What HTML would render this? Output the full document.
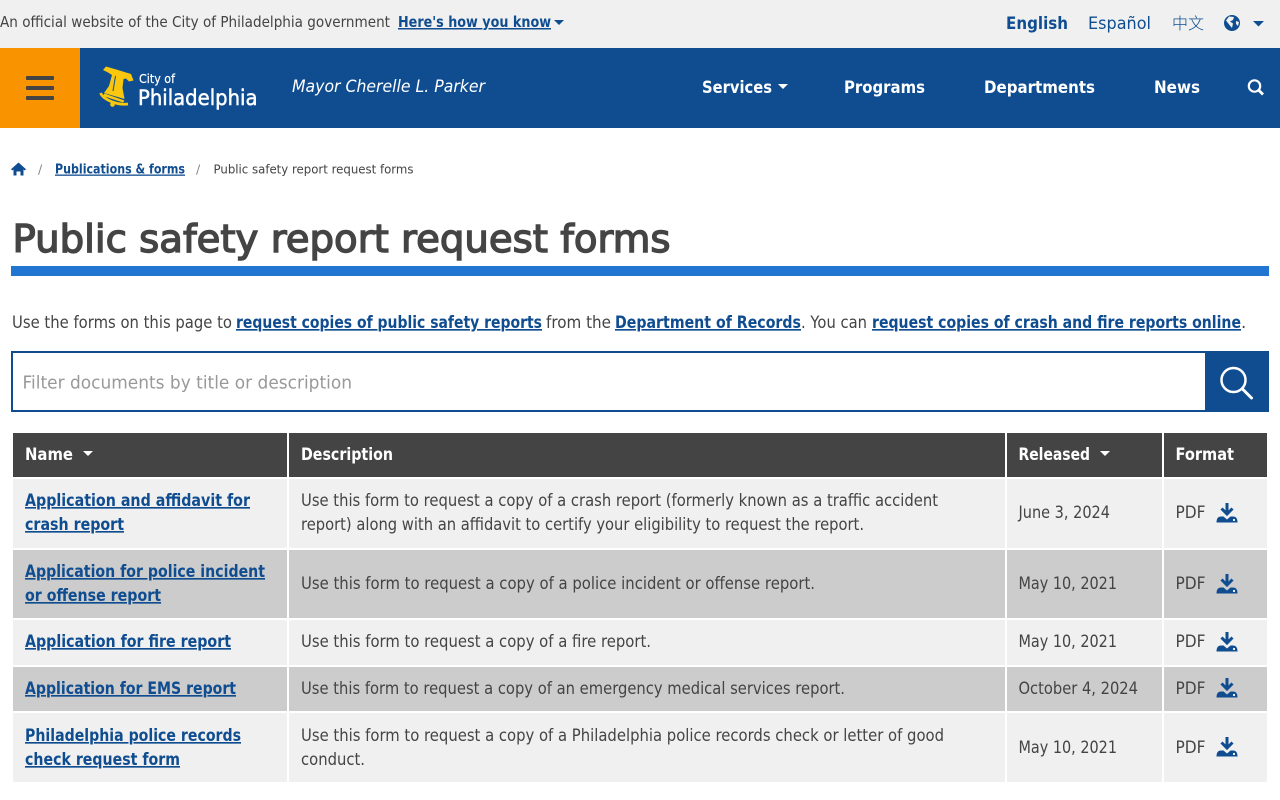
<!DOCTYPE html>
<html lang="en">
<head>
<meta charset="utf-8">
<title>Public safety report request forms</title>
<style>
html,body{margin:0;padding:0;width:1280px;height:800px;overflow:hidden;background:#fff}
svg{display:block;position:absolute;left:0;top:0}
text{font-family:"DejaVu Sans","Liberation Sans",sans-serif;white-space:pre}
.b{font-weight:700}
.t{font-size:16.5px;fill:#444}
.l{font-size:16.5px;font-weight:700;fill:#0f4d90;text-decoration:underline}
.h{font-size:16.5px;font-weight:700;fill:#fff}
.n{font-size:17px;font-weight:700;fill:#fff}
.m{font-size:15px;fill:#444}
.bc{font-size:12.5px;fill:#444}
</style>
</head>
<body>
<svg width="1280" height="800" viewBox="0 0 1280 800" xmlns="http://www.w3.org/2000/svg">
<defs>
<g id="dl">
<path d="M0-10V0M-5.500-4.500L0 1L5.500-4.500" fill="none" stroke="#0f4d90" stroke-width="3"/>
<path d="M-10.500 9.500C-10.500 5.500-9 3.500-6 3.500L-3.500 3.500L0 6.500L3.500 3.500L6 3.500C9 3.500 10.500 5.500 10.500 9.500Z" fill="#0f4d90"/>
<circle cx="7" cy="7" r="1.100" fill="#fff"/>
</g>
</defs>

<!-- Official banner -->
<rect width="1280" height="48" fill="#f0f0f0"/>
<text x="0" y="27" class="m" textLength="390" lengthAdjust="spacingAndGlyphs">An official website of the City of Philadelphia government</text>
<text x="398" y="27" font-size="15" class="b" fill="#0f4d90" text-decoration="underline" textLength="153" lengthAdjust="spacingAndGlyphs">Here's how you know</text>
<path d="M554 20H564L559 25Z" fill="#0f4d90"/>
<text x="1006" y="29" font-size="17" class="b" fill="#0f4d90" textLength="62" lengthAdjust="spacingAndGlyphs">English</text>
<text x="1088" y="29" font-size="17" fill="#0f4d90" textLength="63" lengthAdjust="spacingAndGlyphs">Español</text>
<text x="1172" y="29" font-size="16" fill="#0f4d90" style="font-family:'Noto Sans CJK SC',sans-serif;font-weight:300" textLength="32">中文</text>
<circle cx="1232" cy="23" r="8" fill="#0f4d90"/>
<path d="M1229 16.500L1234 17L1233 20L1230 21.500L1233 23.500L1232 28L1229.500 25L1226 20.500Z M1236 21L1239 22L1238 26L1236 24Z" fill="#f0f0f0"/>
<path d="M1253 21H1264L1258.500 26.500Z" fill="#0f4d90"/>

<!-- Nav -->
<rect y="48" width="1280" height="80" fill="#0f4d90"/>
<rect y="48" width="80" height="80" fill="#f99300"/>
<rect x="26" y="76" width="28" height="4" rx="1" fill="#444"/>
<rect x="26" y="86" width="28" height="4" rx="1" fill="#444"/>
<rect x="26" y="96" width="28" height="4" rx="1" fill="#444"/>

<!-- Liberty bell -->
<path d="M103 70L106 66.500L118 70L131 74L133.500 80.500L129 81.500L126 78.500L123.500 79L122.500 88L124.500 99L104 93L109 86L112 75L108 72.500Z" fill="#f9c80e"/>
<path d="M115.500 76L113 91" stroke="#0f4d90" stroke-width="1" fill="none"/>
<path d="M100.500 93C103 99 116 105.500 128 104" stroke="#f9c80e" stroke-width="2.800" fill="none"/>
<path d="M104.500 93.500L124.500 100.500L123 102.500L103 96Z" fill="#f9c80e"/>
<circle cx="112.500" cy="104.500" r="2.300" fill="#f9c80e"/>

<text x="139" y="83" font-size="12" fill="#fff" stroke="#fff" stroke-width=".2" textLength="36" lengthAdjust="spacingAndGlyphs">City of</text>
<text x="138" y="105" font-size="21.500" fill="#fff" stroke="#fff" stroke-width=".5" textLength="119.500" lengthAdjust="spacingAndGlyphs">Philadelphia</text>
<text x="292" y="92" font-size="16.500" font-style="italic" fill="#fff" textLength="193" lengthAdjust="spacingAndGlyphs">Mayor Cherelle L. Parker</text>

<text x="702" y="93" class="n" textLength="70" lengthAdjust="spacingAndGlyphs">Services</text>
<path d="M778 84H788L783 89Z" fill="#fff"/>
<text x="844" y="93" class="n" textLength="81" lengthAdjust="spacingAndGlyphs">Programs</text>
<text x="984" y="93" class="n" textLength="111" lengthAdjust="spacingAndGlyphs">Departments</text>
<text x="1154" y="93" class="n" textLength="46" lengthAdjust="spacingAndGlyphs">News</text>
<circle cx="1254.500" cy="86" r="5.700" fill="none" stroke="#fff" stroke-width="2.200"/>
<path d="M1258.500 90L1263 94.500" stroke="#fff" stroke-width="2.800"/>

<!-- Breadcrumb -->
<path d="M18.500 162.500L26 169.300L24.800 170.500L23.500 169.500V175.500H20.500V171.500H16.500V175.500H13.500V169.500L12.200 170.500L11 169.300Z" fill="#0f4d90"/>
<text x="38" y="173.500" class="bc" style="fill:#888">/</text>
<text x="55" y="173.500" font-size="13" class="b" fill="#0f4d90" text-decoration="underline" textLength="130" lengthAdjust="spacingAndGlyphs">Publications &amp; forms</text>
<text x="196" y="173.500" class="bc" style="fill:#888">/</text>
<text x="213.500" y="173.500" class="bc" font-size="13" textLength="200" lengthAdjust="spacingAndGlyphs">Public safety report request forms</text>

<!-- Title -->
<text x="12.500" y="252" font-size="38" fill="#444" stroke="#444" stroke-width="1.400" textLength="658" lengthAdjust="spacingAndGlyphs">Public safety report request forms</text>
<rect x="11" y="266" width="1258" height="10" fill="#2176d2"/>

<!-- Intro -->
<text x="12" y="328" class="t" textLength="220" lengthAdjust="spacingAndGlyphs">Use the forms on this page to</text>
<text x="236" y="328" class="l" textLength="306" lengthAdjust="spacingAndGlyphs">request copies of public safety reports</text>
<text x="546" y="328" class="t" textLength="65" lengthAdjust="spacingAndGlyphs">from the</text>
<text x="615" y="328" class="l" textLength="186" lengthAdjust="spacingAndGlyphs">Department of Records</text>
<text x="801" y="328" class="t" textLength="66" lengthAdjust="spacingAndGlyphs">. You can</text>
<text x="872" y="328" class="l" textLength="369" lengthAdjust="spacingAndGlyphs">request copies of crash and fire reports online</text>
<text x="1241" y="328" class="t">.</text>

<!-- Search -->
<rect x="12" y="352" width="1256" height="59" fill="#fff" stroke="#0f4d90" stroke-width="2"/>
<rect x="1205" y="351" width="64" height="61" fill="#0f4d90"/>
<text x="22.500" y="388.500" font-size="18" fill="#999" textLength="329.500" lengthAdjust="spacingAndGlyphs">Filter documents by title or description</text>
<circle cx="1233.500" cy="380" r="12" fill="none" stroke="#fff" stroke-width="2.500"/>
<path d="M1242.500 389L1251.500 398" stroke="#fff" stroke-width="3" stroke-linecap="round"/>

<!-- Table header -->
<rect x="13" y="433" width="274" height="44" fill="#444"/>
<rect x="289" y="433" width="716" height="44" fill="#444"/>
<rect x="1007" y="433" width="155" height="44" fill="#444"/>
<rect x="1164" y="433" width="103" height="44" fill="#444"/>
<text x="25" y="460" class="h" textLength="48" lengthAdjust="spacingAndGlyphs">Name</text>
<path d="M83 451H93L88 456Z" fill="#fff"/>
<text x="301" y="460" class="h" textLength="92" lengthAdjust="spacingAndGlyphs">Description</text>
<text x="1018.500" y="460" class="h" textLength="71.500" lengthAdjust="spacingAndGlyphs">Released</text>
<path d="M1100 451H1110L1105 456Z" fill="#fff"/>
<text x="1175.500" y="460" class="h" textLength="58.500" lengthAdjust="spacingAndGlyphs">Format</text>

<!-- Row 1 -->
<g fill="#f0f0f0">
<rect x="13" y="479" width="274" height="69"/><rect x="289" y="479" width="716" height="69"/><rect x="1007" y="479" width="155" height="69"/><rect x="1164" y="479" width="103" height="69"/>
</g>
<text x="25" y="506" class="l" textLength="225" lengthAdjust="spacingAndGlyphs">Application and affidavit for</text>
<text x="25" y="530" class="l" textLength="99" lengthAdjust="spacingAndGlyphs">crash report</text>
<text x="301" y="506" class="t" textLength="637" lengthAdjust="spacingAndGlyphs">Use this form to request a copy of a crash report (formerly known as a traffic accident</text>
<text x="301" y="530" class="t" textLength="563" lengthAdjust="spacingAndGlyphs">report) along with an affidavit to certify your eligibility to request the report.</text>
<text x="1018.500" y="518" class="t" textLength="91.500" lengthAdjust="spacingAndGlyphs">June 3, 2024</text>
<text x="1175.500" y="518" class="t" textLength="30" lengthAdjust="spacingAndGlyphs">PDF</text>
<use href="#dl" x="1227" y="513"/>

<!-- Row 2 -->
<g fill="#ccc">
<rect x="13" y="550" width="274" height="68"/><rect x="289" y="550" width="716" height="68"/><rect x="1007" y="550" width="155" height="68"/><rect x="1164" y="550" width="103" height="68"/>
</g>
<text x="25" y="577" class="l" textLength="240" lengthAdjust="spacingAndGlyphs">Application for police incident</text>
<text x="25" y="601" class="l" textLength="136" lengthAdjust="spacingAndGlyphs">or offense report</text>
<text x="301" y="589" class="t" textLength="514" lengthAdjust="spacingAndGlyphs">Use this form to request a copy of a police incident or offense report.</text>
<text x="1018.500" y="589" class="t" textLength="98.500" lengthAdjust="spacingAndGlyphs">May 10, 2021</text>
<text x="1175.500" y="589" class="t" textLength="30" lengthAdjust="spacingAndGlyphs">PDF</text>
<use href="#dl" x="1227" y="584"/>

<!-- Row 3 -->
<g fill="#f0f0f0">
<rect x="13" y="620" width="274" height="45"/><rect x="289" y="620" width="716" height="45"/><rect x="1007" y="620" width="155" height="45"/><rect x="1164" y="620" width="103" height="45"/>
</g>
<text x="25" y="647" class="l" textLength="206" lengthAdjust="spacingAndGlyphs">Application for fire report</text>
<text x="301" y="647" class="t" textLength="350" lengthAdjust="spacingAndGlyphs">Use this form to request a copy of a fire report.</text>
<text x="1018.500" y="647" class="t" textLength="98.500" lengthAdjust="spacingAndGlyphs">May 10, 2021</text>
<text x="1175.500" y="647" class="t" textLength="30" lengthAdjust="spacingAndGlyphs">PDF</text>
<use href="#dl" x="1227" y="642"/>

<!-- Row 4 -->
<g fill="#ccc">
<rect x="13" y="667" width="274" height="44"/><rect x="289" y="667" width="716" height="44"/><rect x="1007" y="667" width="155" height="44"/><rect x="1164" y="667" width="103" height="44"/>
</g>
<text x="25" y="694" class="l" textLength="211" lengthAdjust="spacingAndGlyphs">Application for EMS report</text>
<text x="301" y="694" class="t" textLength="544" lengthAdjust="spacingAndGlyphs">Use this form to request a copy of an emergency medical services report.</text>
<text x="1018.500" y="694" class="t" textLength="119.500" lengthAdjust="spacingAndGlyphs">October 4, 2024</text>
<text x="1175.500" y="694" class="t" textLength="30" lengthAdjust="spacingAndGlyphs">PDF</text>
<use href="#dl" x="1227" y="688"/>

<!-- Row 5 -->
<g fill="#f0f0f0">
<rect x="13" y="713" width="274" height="69"/><rect x="289" y="713" width="716" height="69"/><rect x="1007" y="713" width="155" height="69"/><rect x="1164" y="713" width="103" height="69"/>
</g>
<text x="25" y="741" class="l" textLength="216" lengthAdjust="spacingAndGlyphs">Philadelphia police records</text>
<text x="25" y="765" class="l" textLength="155" lengthAdjust="spacingAndGlyphs">check request form</text>
<text x="301" y="741" class="t" textLength="643" lengthAdjust="spacingAndGlyphs">Use this form to request a copy of a Philadelphia police records check or letter of good</text>
<text x="301" y="765" class="t" textLength="64" lengthAdjust="spacingAndGlyphs">conduct.</text>
<text x="1018.500" y="753" class="t" textLength="98.500" lengthAdjust="spacingAndGlyphs">May 10, 2021</text>
<text x="1175.500" y="753" class="t" textLength="30" lengthAdjust="spacingAndGlyphs">PDF</text>
<use href="#dl" x="1227" y="747"/>
</svg>
</body>
</html>
